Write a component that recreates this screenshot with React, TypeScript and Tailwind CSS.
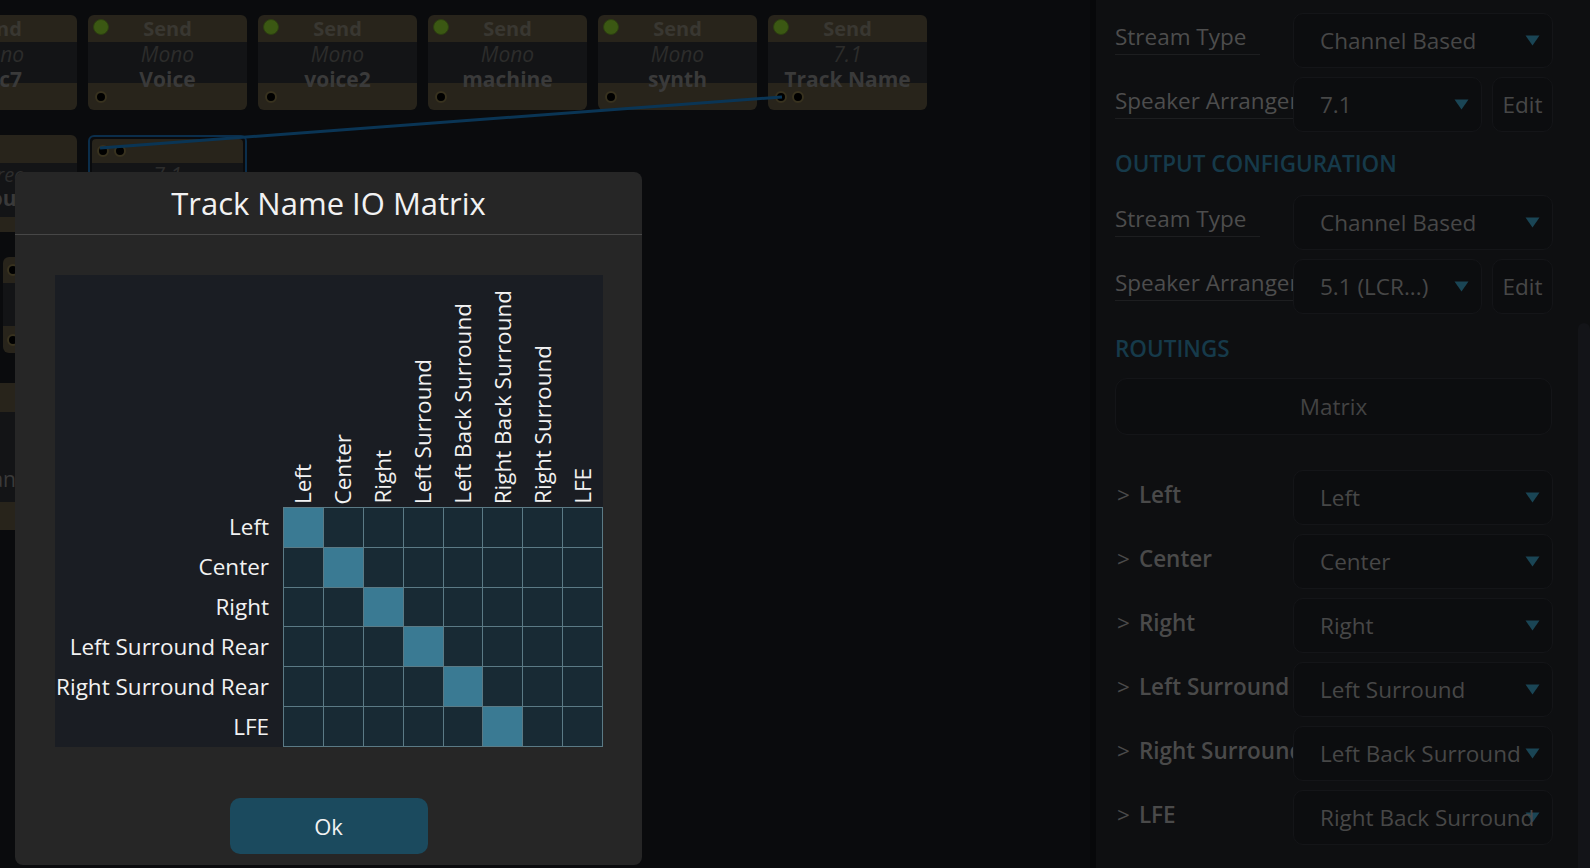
import React from "react";

const rows = ["Left", "Center", "Right", "Left Surround Rear", "Right Surround Rear", "LFE"];
const cols = [
  "Left",
  "Center",
  "Right",
  "Left Surround",
  "Left Back Surround",
  "Right Back Surround",
  "Right Surround",
  "LFE",
];

const sends = [
  { pos: "left-[-82px]", fmt: "Mono", name: "Mic7", outs: 1 },
  { pos: "left-[88px]", fmt: "Mono", name: "Voice", outs: 1 },
  { pos: "left-[258px]", fmt: "Mono", name: "voice2", outs: 1 },
  { pos: "left-[428px]", fmt: "Mono", name: "machine", outs: 1 },
  { pos: "left-[598px]", fmt: "Mono", name: "synth", outs: 1 },
  { pos: "left-[768px]", fmt: "7.1", name: "Track Name", outs: 2 },
];

const routings = [
  { label: "Left", value: "Left" },
  { label: "Center", value: "Center" },
  { label: "Right", value: "Right" },
  { label: "Left Surround", value: "Left Surround" },
  { label: "Right Surround", value: "Left Back Surround" },
  { label: "LFE", value: "Right Back Surround" },
];

const Dot = () => (
  <span className="w-[12px] h-[12px] rounded-full bg-black border-2 border-[#38321f]" />
);

const SendNode = ({ pos, fmt, name, outs }: { pos: string; fmt: string; name: string; outs: number }) => (
  <div className={`absolute ${pos} top-[15px] w-[159px] h-[95px] rounded-[6px] overflow-hidden flex flex-col bg-[#28241b]`}>
    <div className="relative h-[27px] flex items-center justify-center">
      <span className="absolute left-[5px] top-[4px] w-[16px] h-[16px] rounded-full bg-[#3b5813] border border-[#2d3f12]" />
      <span className="text-[20px] font-bold leading-none text-[#393731]">Send</span>
    </div>
    <div className="h-[41px] bg-[#131416] flex flex-col items-center">
      <span className="italic text-[21px] leading-[20px] mt-[2px] text-[#2c2c2b]">{fmt}</span>
      <span className="font-bold text-[21px] leading-[21px] mt-[5px] text-[#3a3a3a] whitespace-nowrap">{name}</span>
    </div>
    <div className="flex-1 flex items-center gap-[5px] pl-[7px]">
      {Array.from({ length: outs }).map((_, i) => (
        <Dot key={i} />
      ))}
    </div>
  </div>
);

const Triangle = () => (
  <svg className="absolute right-[12px] top-[21px]" width="15" height="11" viewBox="0 0 15 11">
    <path d="M0.5 0.5H14.5L7.5 10.5Z" fill="#1a4555" />
  </svg>
);

const Select = ({ value, w }: { value: string; w: string }) => (
  <div className={`relative h-[55px] ${w} rounded-[10px] bg-[#0c0d0f] border border-[#141518] flex items-center pl-[26px] whitespace-nowrap overflow-hidden`}>
    <Triangle />
    <span className="relative text-[#474747]">{value}</span>
  </div>
);

const Field = ({ label, value, edit }: { label: string; value: string; edit?: boolean }) => (
  <div className="flex items-center h-[55px]">
    <div className="w-[178px] overflow-hidden whitespace-nowrap -mt-[6px]">
      <span className="inline-block border-b border-[#1d1e20] pr-[14px] text-[#4d4d4d]">{label}</span>
    </div>
    {edit ? (
      <div className="flex gap-[10px]">
        <Select value={value} w="w-[189px]" />
        <div className="h-[55px] w-[61px] rounded-[10px] bg-[#0c0d0f] border border-[#141518] flex items-center justify-center text-[#474747]">
          Edit
        </div>
      </div>
    ) : (
      <Select value={value} w="w-[260px]" />
    )}
  </div>
);

const Heading = ({ children, cls }: { children: React.ReactNode; cls: string }) => (
  <div className={`${cls} flex items-center font-semibold text-[#163a4a]`}>{children}</div>
);

export default function App() {
  return (
    <div className="relative w-[1590px] h-[868px] overflow-hidden flex bg-[#0a0b0d] font-['Open_Sans','Noto_Sans',sans-serif]">
      {/* node canvas */}
      <div className="relative flex-1 h-full overflow-hidden">
        {sends.map((s) => (
          <SendNode key={s.name} {...s} />
        ))}

        {/* second row */}
        <div className="absolute left-[-82px] top-[135px] w-[159px] h-[97px] rounded-[6px] overflow-hidden flex flex-col bg-[#28241b]">
          <div className="h-[28px]" />
          <div className="h-[54px] bg-[#131416] flex flex-col items-center">
            <span className="italic text-[20px] leading-[20px] mt-[2px] text-[#2d2d2d]">Stereo</span>
            <span className="font-bold text-[21px] leading-[26px] text-[#3a3a3a]">Group</span>
          </div>
        </div>
        <div className="absolute left-[88px] top-[135px] w-[159px] h-[100px] rounded-[6px] border-2 border-[#0b2e4b] p-[2px]">
          <div className="h-full rounded-[4px] overflow-hidden flex flex-col bg-[#28241b]">
            <div className="h-[24px] flex items-center gap-[5px] pl-[5px]">
              <Dot />
              <Dot />
            </div>
            <div className="flex-1 bg-[#131416] flex flex-col items-center">
              <span className="italic text-[21px] leading-[20px] mt-[2px] text-[#2d2d2d]">7.1</span>
            </div>
          </div>
        </div>
        <div className="absolute left-[3px] top-[257px] w-[120px] h-[96px] rounded-[6px] overflow-hidden flex flex-col bg-[#28241b]">
          <div className="h-[26px] flex items-center pl-[4px]">
            <Dot />
          </div>
          <div className="h-[43px] bg-[#131416]" />
          <div className="flex-1 flex items-center pl-[4px]">
            <Dot />
          </div>
        </div>
        <div className="absolute left-[-120px] top-[383px] w-[160px] h-[147px] rounded-[6px] overflow-hidden flex flex-col bg-[#28241b]">
          <div className="h-[29px]" />
          <div className="h-[90px] bg-[#131416] flex items-end justify-end pb-[12px] pr-[24px]">
            <span className="text-[21px] leading-none text-[#3a3a3a]">Ocean</span>
          </div>
        </div>

        <svg className="absolute inset-0 pointer-events-none" width="1090" height="868">
          <line x1="100" y1="148" x2="782" y2="97" stroke="#0a3555" strokeWidth="3" />
        </svg>
      </div>

      {/* properties panel */}
      <div className="w-[500px] h-full border-l-[6px] border-[#07080a] bg-[#0e0f11] flex text-[22.5px]">
        <div className="w-[482px] pl-[19px] pt-[13px] flex flex-col">
          <div className="w-[438px] flex flex-col gap-[9px]">
            <Field label="Stream Type" value="Channel Based" />
            <Field label="Speaker Arrangement" value="7.1" edit />
          </div>
          <Heading cls="h-[63px]">OUTPUT CONFIGURATION</Heading>
          <div className="w-[438px] flex flex-col gap-[9px]">
            <Field label="Stream Type" value="Channel Based" />
            <Field label="Speaker Arrangement" value="5.1 (LCR...)" edit />
          </div>
          <Heading cls="h-[64px] pt-[6px]">ROUTINGS</Heading>
          <div className="w-[437px] h-[57px] rounded-[12px] bg-[#0c0d0f] border border-[#141518] flex items-center justify-center text-[#434343]">
            Matrix
          </div>
          <div className="w-[438px] mt-[35px] flex flex-col gap-[9px]">
            {routings.map((r) => (
              <div key={r.label} className="flex items-center h-[55px]">
                <div className="w-[178px] overflow-hidden whitespace-nowrap -mt-[6px] pl-[2px] font-semibold text-[#4a4a4a]">
                  <span className="font-normal mr-[9px]">&gt;</span>
                  {r.label}
                </div>
                <Select value={r.value} w="w-[260px]" />
              </div>
            ))}
          </div>
        </div>
        <div className="w-[12px] mt-[323px] rounded-t-[6px] bg-[#131418]" />
      </div>

      {/* modal */}
      <div className="absolute left-[15px] top-[172px] w-[627px] h-[693px] rounded-[8px] bg-[#262626] flex flex-col">
        <div className="h-[63px] shrink-0 flex items-center justify-center border-b border-[#474747]">
          <span className="text-[31px] font-medium text-[#f2f2f2]">Track Name IO Matrix</span>
        </div>
        <div className="pt-[40px] px-[40px]">
          <div className="w-[548px] h-[472px] bg-[#1a1d23] grid grid-cols-[228px_320px] grid-rows-[232px_240px] text-[22.5px] text-[#f2f2f2]">
            <div />
            <div className="grid grid-cols-8">
              {cols.map((c) => (
                <div key={c} className="flex items-end justify-center pb-[3px]">
                  <span className="[writing-mode:vertical-rl] rotate-180 whitespace-nowrap leading-[28px]">{c}</span>
                </div>
              ))}
            </div>
            <div className="grid grid-rows-6">
              {rows.map((r) => (
                <div key={r} className="flex items-center justify-end pr-[14px] whitespace-nowrap">
                  {r}
                </div>
              ))}
            </div>
            <div className="grid grid-cols-8 grid-rows-6 gap-px p-px bg-[#5b7a85]">
              {rows.map((r, ri) =>
                cols.map((c, ci) => (
                  <div key={r + c} className={ri === ci ? "bg-[#3a7a93]" : "bg-[#182a34]"} />
                ))
              )}
            </div>
          </div>
          <button className="block mx-auto mt-[51px] w-[198px] h-[56px] rounded-[10px] bg-[#1b4a5e] text-[22px] text-[#f2f2f2]">
            Ok
          </button>
        </div>
      </div>
    </div>
  );
}
